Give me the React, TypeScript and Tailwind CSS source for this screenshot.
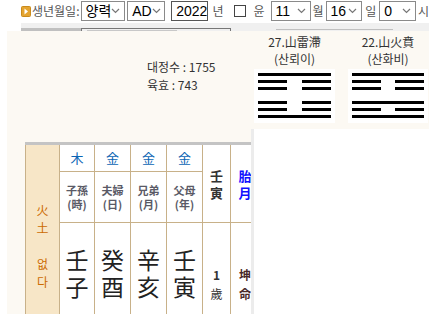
import * as React from "react";

const KR = { fontFamily: '"Noto Sans CJK KR", "Liberation Sans", sans-serif' };
const SANS = { fontFamily: '"Liberation Sans", "Noto Sans CJK KR", sans-serif' };

const Chevron = () => (
	<svg width="9" height="6" viewBox="0 0 9 6" className="shrink-0">
		<path d="M1 1 L4.5 4.5 L8 1" fill="none" stroke="#777" strokeWidth="1.2" />
	</svg>
);

const FakeSelect = ({ value, width }: { value: string; width: string }) => (
	<div
		className={`flex h-[20px] ${width} items-center justify-between border border-[#8a8a8a] bg-white pl-[4px] pr-[4px] text-[14px] text-black`}
		style={SANS}
	>
		<span>{value}</span>
		<Chevron />
	</div>
);

const Label = ({ children, className = "" }: { children: React.ReactNode; className?: string }) => (
	<span className={`text-[12px] text-[#555] ${className}`} style={KR}>
		{children}
	</span>
);

// true = 양효(full), false = 음효(broken), top to bottom
const Line = ({ yang }: { yang: boolean }) =>
	yang ? (
		<div className="h-[3px] w-full bg-black" />
	) : (
		<div className="flex w-full justify-between">
			<div className="h-[3px] w-[29px] bg-black" />
			<div className="h-[3px] w-[29px] bg-black" />
		</div>
	);

const Hexagram = ({
	name,
	kr,
	lines,
	width,
}: {
	name: string;
	kr: string;
	lines: boolean[];
	width: string;
}) => (
	<div className={`flex ${width} flex-col items-center`} style={KR}>
		<div className="pt-[2px] text-[12px] leading-[17px] text-[#333]">{name}</div>
		<div className="text-[12px] leading-[17px] text-[#333]">{kr}</div>
		<div className="mt-[2px] flex w-full flex-col gap-[11px] bg-white px-[4px] pt-[4px] pb-[5px]">
			<div className="flex flex-col gap-[4px]">
				{lines.slice(0, 3).map((l, i) => (
					<Line key={i} yang={l} />
				))}
			</div>
			<div className="flex flex-col gap-[4px]">
				{lines.slice(3).map((l, i) => (
					<Line key={i} yang={l} />
				))}
			</div>
		</div>
	</div>
);

const pillars = [
	{ elem: "木", rel: "子孫", pos: "(時)", top: "壬", bottom: "子" },
	{ elem: "金", rel: "夫婦", pos: "(日)", top: "癸", bottom: "酉" },
	{ elem: "金", rel: "兄弟", pos: "(月)", top: "辛", bottom: "亥" },
	{ elem: "金", rel: "父母", pos: "(年)", top: "壬", bottom: "寅" },
];

const SajuTable = () => (
	<div
		className="ml-[18px] grid w-max grid-cols-[33px_34px_35px_35px_35px_27px_28px] grid-rows-[26px_50px_99px] gap-px border-t-[3px] border-[#c4c4c4] bg-[#c8b189] pl-px"
		style={KR}
	>
		<div className="row-span-3 flex flex-col items-center bg-[#f7e6c7] pt-[56px] text-[12px] leading-[18px] text-[#cc6a00]">
			<span>火</span>
			<span>土</span>
			<span>&nbsp;</span>
			<span>없</span>
			<span>다</span>
		</div>
		{pillars.map((p, i) => (
			<div key={"e" + i} className="flex items-center justify-center bg-white text-[13px] text-[#0a64b4]">
				{p.elem}
			</div>
		))}
		<div className="row-span-2 flex flex-col items-center justify-center bg-white text-[13px] leading-[17px] font-bold text-[#333]">
			<span>壬</span>
			<span>寅</span>
		</div>
		<div className="row-span-2 flex flex-col items-center justify-center bg-white text-[13px] leading-[17px] font-bold text-[#1010ff]">
			<span>胎</span>
			<span>月</span>
		</div>
		{pillars.map((p, i) => (
			<div
				key={"r" + i}
				className="flex flex-col items-center justify-center bg-white text-[11px] leading-[14px] font-bold text-[#5a5a66]"
			>
				<span>{p.rel}</span>
				<span>{p.pos}</span>
			</div>
		))}
		{pillars.map((p, i) => (
			<div
				key={"g" + i}
				className="flex flex-col items-center bg-white pt-[23px] text-[23px] leading-[27px] text-[#222]"
			>
				<span>{p.top}</span>
				<span>{p.bottom}</span>
			</div>
		))}
		<div className="flex flex-col items-center bg-white pt-[42px] text-[12px] leading-[19px] text-[#333]">
			<span className="font-bold">1</span>
			<span>歲</span>
		</div>
		<div className="flex flex-col items-center bg-white pt-[42px] text-[12px] leading-[19px] font-bold text-[#4a2a2a]">
			<span>坤</span>
			<span>命</span>
		</div>
	</div>
);

export default function App() {
	return (
		<div className="flex h-[314px] w-[429px] flex-col overflow-hidden bg-white">
			{/* 생년월일 입력줄 */}
			<div className="flex h-[23px] shrink-0 items-start pt-px pl-[21px] whitespace-nowrap">
				<div className="flex h-[20px] items-center">
					<svg width="10" height="11" viewBox="0 0 10 11" className="mr-px">
						<rect x="0.5" y="0.5" width="9" height="10" rx="1" fill="#e4a430" stroke="#c98a1c" />
						<path d="M3.5 2.5 L7 5.5 L3.5 8.5 Z" fill="#fff" />
					</svg>
					<Label className="mr-px">생년월일:</Label>
				</div>
				<FakeSelect value="양력" width="w-[47px]" />
				<div className="ml-[2px]">
					<FakeSelect value="AD" width="w-[38px]" />
				</div>
				<div
					className="ml-[6px] flex h-[20px] w-[40px] items-center border border-[#555] bg-white pl-[4px] text-[14px] text-black"
					style={SANS}
				>
					2022
				</div>
				<div className="flex h-[20px] items-center">
					<Label className="ml-[4px]">년</Label>
					<div className="ml-[11px] h-[12px] w-[12px] border border-[#444] bg-white" />
					<Label className="ml-[7px]">윤</Label>
				</div>
				<div className="ml-[6px]">
					<FakeSelect value="11" width="w-[40px]" />
				</div>
				<div className="flex h-[20px] items-center">
					<Label className="mx-[2px]">월</Label>
				</div>
				<FakeSelect value="16" width="w-[40px]" />
				<div className="flex h-[20px] items-center">
					<Label className="mx-[3px]">일</Label>
				</div>
				<FakeSelect value="0" width="w-[40px]" />
				<div className="flex h-[20px] items-center">
					<Label className="ml-[2px]">시</Label>
				</div>
			</div>

			{/* 잘린 탭 줄 */}
			<div className="ml-[21px] flex h-[8px] shrink-0 items-end bg-[#f0f0f0]">
				<div className="h-[3px] w-[60px] bg-[#c0c0c0]" />
				<div className="h-[3px] w-[150px] border-t border-x border-[#777] pl-[5px]">
					<div className="mt-px h-px w-[90px] bg-[#c8c8c8]" />
				</div>
				<div className="ml-[45px] mb-px h-px w-[117px] bg-[#c0c0c0]" />
			</div>

			{/* 본문 */}
			<div className="ml-[7px] flex min-h-0 flex-1 bg-[#fcf9f3]">
				<div className="w-[244px] shrink-0 overflow-hidden">
					<div className="ml-[140px] pt-[27px] text-[12px] leading-[18px] text-[#333]" style={KR}>
						<div>대정수 : 1755</div>
						<div>육효 : 743</div>
					</div>
					<div className="mt-[48px]">
						<SajuTable />
					</div>
				</div>
				<div className="flex min-w-0 flex-1 flex-col">
					<div className="flex h-[98px] shrink-0 gap-[13px] pl-[3px]">
						<Hexagram
							name="27.山雷滯"
							kr="(산뢰이)"
							width="w-[81px]"
							lines={[true, false, false, false, false, true]}
						/>
						<Hexagram
							name="22.山火賁"
							kr="(산화비)"
							width="w-[80px]"
							lines={[true, false, false, true, false, true]}
						/>
					</div>
					<div className="flex-1 border-l-[3px] border-[#ececec] bg-white" />
				</div>
			</div>
		</div>
	);
}
